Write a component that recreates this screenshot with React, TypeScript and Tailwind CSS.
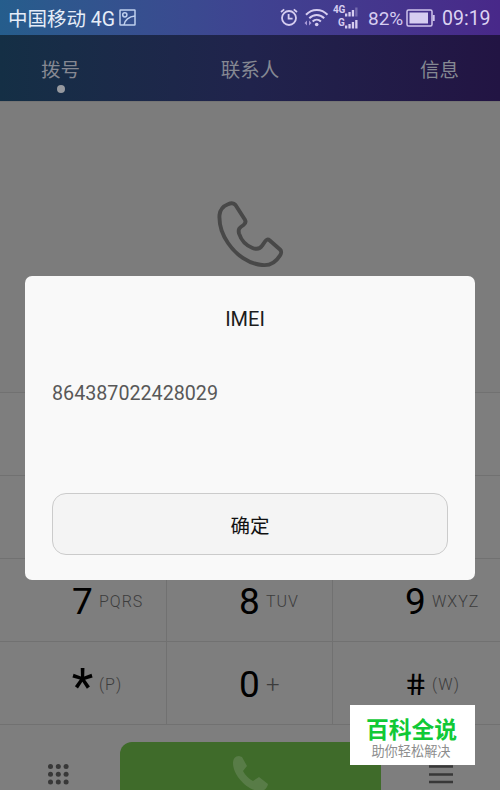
import React from "react";

type KeyProps = { digit: React.ReactNode; sub: string; subClass?: string; last?: boolean };

function Key({ digit, sub, subClass = "text-[16px] tracking-[1px]", last = false }: KeyProps) {
  return (
    <div className={`flex h-full items-center pl-[72px] pt-[3px] ${last ? "" : "border-r border-[#717171]"}`}>
      <span className="flex w-[21px] justify-center text-[37px] leading-none text-black">{digit}</span>
      <span className={`ml-[6px] whitespace-nowrap font-light leading-none text-[#3c3c3c] ${subClass}`}>{sub}</span>
    </div>
  );
}

function KeyRow({ children }: { children?: React.ReactNode }) {
  return (
    <div className="grid h-[83px] shrink-0 grid-cols-[167px_166px_167px] border-t border-[#717171]">{children}</div>
  );
}

function StatusBar() {
  return (
    <div className="flex h-[35px] shrink-0 items-center bg-linear-to-r from-[#255d8c] via-[#3f4391] to-[#482889] pl-[8px] text-[19.5px] text-[#e6edf8]">
      <span className="w-[111px] whitespace-nowrap pt-[4px] leading-none">中国移动 4G</span>
      <svg width="17" height="17" viewBox="0 0 17 17" fill="none" stroke="#bfd0ee" strokeWidth="1.5">
        <rect x="1" y="1" width="15" height="15" rx="0.5" />
        <circle cx="5.8" cy="5.8" r="2.1" />
        <path d="M5 16C5.5 11 10 7.5 16 7" />
      </svg>
      <svg className="ml-[143px]" width="20" height="20" viewBox="0 0 20 20" fill="none" stroke="#d6cdf0" strokeWidth="1.8">
        <circle cx="10" cy="10" r="7" />
        <path d="M9.6 6v4.600h4M2 4L5.200 1.400M18 4L14.800 1.400" />
      </svg>
      <svg className="ml-[4px]" width="26" height="20" viewBox="0 0 26 20" fill="none" stroke="#d6cdf0" strokeWidth="2">
        <path d="M3 6.700C9 .3 18.500 .3 24.500 6.700M6.300 10.300C10.500 6 17 6 21.200 10.300M9.600 13.500C12 11.200 15.500 11.200 17.900 13.500" />
        <circle cx="13.700" cy="16.500" r="1.800" fill="#d6cdf0" stroke="none" />
        <path d="M4 12.500v5L1.500 15zM6 12.500v5L8.500 15z" fill="#a99ad8" stroke="none" />
      </svg>
      <div className="ml-[4px] flex h-[27px] w-[28px] flex-col text-[10px] font-bold leading-[11px] text-[#d6cdf0]">
        <div className="flex h-[13px]">
          <span className="w-[12px] tracking-[-0.3px]">4G</span>
          <svg width="13" height="13" viewBox="0 0 13 13" fill="#d6cdf0">
            <path d="M0 9.500h2.300v3H0zM3.400 8h2.300v4.500H3.400zM6.800 6h2.300v6.500H6.800z" />
            <path d="M10.200 3.500h2.300v9h-2.300z" opacity=".35" />
          </svg>
        </div>
        <div className="flex h-[13px]">
          <span className="w-[12px] pl-[5px]">G</span>
          <svg width="13" height="13" viewBox="0 0 13 13" fill="#d6cdf0">
            <path d="M0 8.500h2.300v3H0zM3.400 7h2.300v4.500H3.400zM6.800 5h2.300v6.500H6.800zM10.200 3h2.300v8.500h-2.300z" />
          </svg>
        </div>
      </div>
      <span className="ml-[7px] w-[38px] pt-[2px] text-[19px] leading-none text-[#d6cdf0]">82%</span>
      <svg width="29" height="18" viewBox="0 0 29 18" fill="none" stroke="#cfc4ec" strokeWidth="1.500">
        <rect x="1" y="1" width="25" height="16" rx="1.500" />
        <rect x="3.500" y="3.500" width="18.500" height="11" fill="#d6cdf0" stroke="none" />
        <path d="M27.700 6v6" strokeWidth="2" />
      </svg>
      <span className="ml-[7px] pt-[3px] text-[19.5px] leading-none text-[#dcd2f2]">09:19</span>
    </div>
  );
}

export default function App() {
  return (
    <div className="relative flex h-[790px] w-[500px] flex-col overflow-hidden bg-[#7e7e7e] font-[Roboto,'Noto_Sans_CJK_SC',sans-serif]">
      <StatusBar />
      <div className="flex h-[66px] shrink-0 justify-between bg-linear-to-r from-[#142f45] via-[#20234c] to-[#221443] px-[41px] pt-[26px] text-[19.5px] leading-[20px] text-[#858892]">
        <div className="flex flex-col items-center">
          <span>拨号</span>
          <span className="mt-[4px] size-[8px] rounded-full bg-[#96999f]" />
        </div>
        <span>联系人</span>
        <span>信息</span>
      </div>
      <div className="flex h-[291px] shrink-0 justify-center border-t border-[#747474] bg-[#7c7c7c] pt-[98px]">
        <svg width="68" height="70" viewBox="0 0 68 70" fill="none" stroke="#484848" strokeWidth="3.900" strokeLinejoin="round">
          <path d="M14.500 3.500C16.500 2.500 18.500 3 19.500 4.500L34.500 0" stroke="none" />
          <path d="M12 4.200C15.500 2.500 18 3 19.500 5L28.800 19.500C30 21.500 29.500 23.500 27.500 25C23 28 22 29 23 33.500C25 39.500 30 45.500 36.500 48C40.500 49.500 44 49 46 45.800L49 41.500C50.500 39.300 52 39 53.500 40.200L64 49.500C66 51.500 65.500 53 64 55.500C60 62 54 66 46 65C33 64 20 55 12 43C5 33 3 24 3.500 15C4 9 7.500 6 12 4.200Z" />
        </svg>
      </div>
      <KeyRow />
      <KeyRow />
      <KeyRow>
        <Key digit="7" sub="PQRS" />
        <Key digit="8" sub="TUV" />
        <Key digit="9" sub="WXYZ" last />
      </KeyRow>
      <KeyRow>
        <Key digit={<span className="pt-[5px] text-[50px] leading-none">*</span>} sub="(P)" />
        <Key digit="0" sub="+" subClass="text-[24px]" />
        <Key digit={<span className="skew-x-[9deg] scale-x-110 text-[30px] leading-none">#</span>} sub="(W)" last />
      </KeyRow>
      <div className="flex h-[66px] shrink-0 border-t border-[#717171] pt-[17px]">
        <div className="flex w-[120px] justify-center pt-[22px]">
          <svg className="mr-[3px]" width="21" height="21" viewBox="0 0 21 21" fill="#383838">
            {[2.5, 10.3, 18.1].map((y) => [2.5, 10.3, 18.1].map((x) => <circle key={`${x}-${y}`} cx={x} cy={y} r="2.500" />))}
          </svg>
        </div>
        <div className="flex h-[80px] w-[261px] justify-center rounded-[12px] bg-[#3f6b2a] pt-[13px]">
          <svg width="37" height="38" viewBox="0 0 37 38" fill="#587c47">
            <path d="M7 1L10 2L15 11L11 16C13 20 17 24 21 26L27 22L36 29C35 34 31 37 26 36C14 34 1 20 1 8C1 4 3 1 7 1Z" />
          </svg>
        </div>
        <div className="flex flex-1 justify-center pt-[23px]">
          <svg width="24" height="19" viewBox="0 0 24 19" stroke="#383838" strokeWidth="2.600">
            <path d="M0 1.500h24M0 9.500h24M0 17h24" />
          </svg>
        </div>
      </div>
      <div className="absolute left-[25px] top-[276px] flex h-[304px] w-[450px] flex-col rounded-[7px] bg-[#f9f9f9] px-[27px] pt-[33px]">
        <h1 className="pr-[10px] text-center text-[20px] leading-[20px] text-[#1c1c1c]">IMEI</h1>
        <p className="mt-[55px] text-[19.7px] leading-[20px] text-[#585858]">864387022428029</p>
        <button className="mt-[89px] h-[62px] w-[396px] rounded-[14px] border border-[#cbcbcb] bg-[#f4f4f4] pt-[5px] text-[19.5px] text-[#111111]">确定</button>
      </div>
      <div className="absolute left-[350px] top-[705px] flex h-[60px] w-[125px] flex-col items-center bg-white pt-[14px]">
        <span className="mr-[2px] text-[22.8px] font-bold leading-[24px] text-[#10c936]">百科全说</span>
        <span className="mr-[3px] mt-px text-[13.2px] leading-[15px] text-[#8d8d8d]">助你轻松解决</span>
      </div>
    </div>
  );
}
